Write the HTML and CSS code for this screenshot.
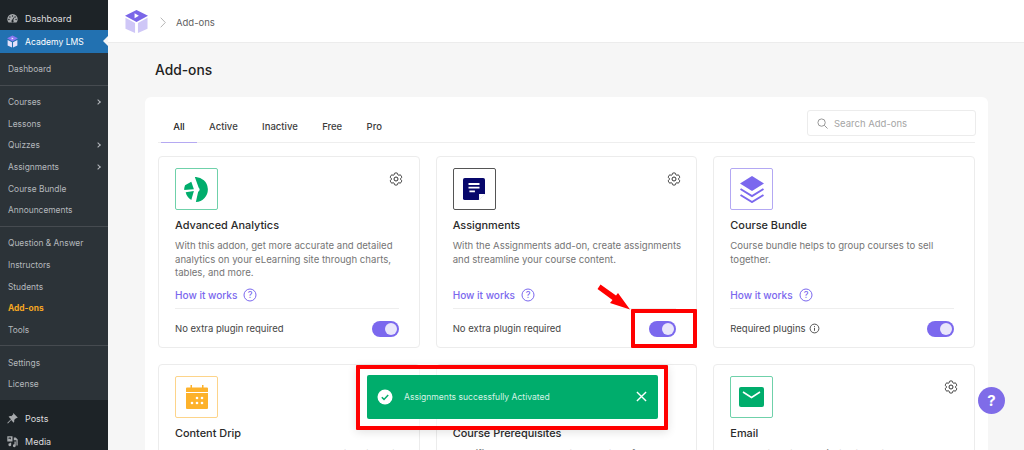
FILE: index.html
```html
<!DOCTYPE html>
<html lang="en">
<head>
<meta charset="utf-8">
<title>Add-ons</title>
<link rel="stylesheet" href="styles.css">
</head>
<body>
<div class="page">
  <aside class="sidebar">
    <a class="top-item first">
      <svg class="wp-icon" viewBox="0 0 20 20"><path fill="#a7aaad" d="M10 3a8 8 0 0 0-8 8c0 2 .7 3.800 1.900 5.200h12.200A8 8 0 0 0 18 11a8 8 0 0 0-8-8zM6 6.500a1.100 1.100 0 1 1 0 2.200 1.100 1.100 0 0 1 0-2.200zM10 5a1.100 1.100 0 1 1 0 2.200A1.100 1.100 0 0 1 10 5zm4 1.500a1.100 1.100 0 1 1 0 2.200 1.100 1.100 0 0 1 0-2.200zM4.500 10.500a1.100 1.100 0 1 1 0 2.200 1.100 1.100 0 0 1 0-2.200zm11 0a1.100 1.100 0 1 1 0 2.200 1.100 1.100 0 0 1 0-2.200zM13 8.500l-2 4.200a1.700 1.700 0 1 1-2 .1l3.200-4.700z"/></svg>
      <span>Dashboard</span>
    </a>
    <a class="top-item current">
      <svg class="wp-icon" viewBox="0 0 24 24"><path fill="#8b78f0" d="M12 1l10 5-10 6L2 6z"/><path fill="#e6e1fb" d="M3 9l8 4.500V23l-8-3.500zM21 9l-8 4.500V23l8-3.500z"/><path fill="#fff" d="M10.500 4.500l3.500 1.800-3.500 1.800z"/></svg>
      <span>Academy LMS</span>
    </a>
    <nav class="submenu">
      <div class="group"><a class="sub">Dashboard</a></div>
      <div class="group">
        <a class="sub">Courses<i class="chev"></i></a>
        <a class="sub">Lessons</a>
        <a class="sub">Quizzes<i class="chev"></i></a>
        <a class="sub">Assignments<i class="chev"></i></a>
        <a class="sub">Course Bundle</a>
        <a class="sub">Announcements</a>
      </div>
      <div class="group">
        <a class="sub">Question &amp; Answer</a>
        <a class="sub">Instructors</a>
        <a class="sub">Students</a>
        <a class="sub active">Add-ons</a>
        <a class="sub">Tools</a>
      </div>
      <div class="group">
        <a class="sub">Settings</a>
        <a class="sub">License</a>
      </div>
    </nav>
    <div class="lower">
      <a class="top-item">
        <svg class="wp-icon" viewBox="0 0 20 20"><path fill="#a7aaad" d="M11.500 2l6.500 6.500-1.300 1.300-1-.6-3.200 3.200c.6 1.500.3 3-.8 4.100L8 12.300 3 17.500l-1-.5.500-1L7.700 11 4 7.300c1.100-1.100 2.700-1.400 4.100-.8l3.200-3.200-.6-1z"/></svg>
        <span>Posts</span>
      </a>
      <a class="top-item">
        <svg class="wp-icon" viewBox="0 0 20 20"><path fill="#a7aaad" d="M2 2h8v8H2zm2 2v2.500l1.500-1 2 1.500V4zM12 4h3l3 3v9h-2V8h-4zM6 12h2v2.500A2.200 2.200 0 1 1 6 12.800zm7-2h2v6.500a2.200 2.200 0 1 1-2-2.200z"/></svg>
        <span>Media</span>
      </a>
    </div>
  </aside>

  <main class="main">
    <header class="topbar">
      <svg class="logo" viewBox="0 0 26 24"><path fill="#7a66e8" d="M13 0l12 6-12 6.500L1 6z"/><path fill="#cfc7f7" d="M1.500 8l10 5.500V24l-10-4.500zM24.500 8l-10 5.500V24l10-4.500z"/><path fill="#fff" d="M11 3.500l4.500 2.500L11 8.500z"/></svg>
      <svg class="crumb-sep" viewBox="0 0 6 11"><path d="M.7.7l4.600 4.800L.7 10.300" fill="none" stroke="#b5b5b5" stroke-width="1"/></svg>
      <span class="crumb">Add-ons</span>
    </header>
    <div class="content">
      <h1 class="title">Add-ons</h1>
      <section class="panel">
        <div class="tabs">
          <a class="tab on">All</a>
          <a class="tab">Active</a>
          <a class="tab">Inactive</a>
          <a class="tab">Free</a>
          <a class="tab">Pro</a>
          <div class="search">
            <svg class="search-icon" viewBox="0 0 12 12"><circle cx="5" cy="5" r="4" fill="none" stroke="#8e8e8e"/><path d="M8 8l3.500 3.500" stroke="#8e8e8e"/></svg>
            <span>Search Add-ons</span>
          </div>
        </div>
        <div class="grid">

          <article class="card">
            <div class="card-top">
              <div class="badge b-green">
                <svg class="art" viewBox="0 0 24 24"><path fill="#00ad6c" d="M10.400 0A12 12 0 1 1 11.400 24L13.600 14.200A2.500 2.500 0 0 0 14 10z"/><path fill="#00ad6c" d="M1 8L7 4.500 9.500 11.700.2 12.500A12 12 0 0 1 1 8z"/><path fill="#00ad6c" d="M1.600 14.600L9.500 13.500 7 22A12 12 0 0 1 1.600 14.600z"/></svg>
              </div>
              <svg class="gear" viewBox="0 0 24 24"><use href="#gear-shape"/></svg>
            </div>
            <h2 class="name">Advanced Analytics</h2>
            <p class="desc">With this addon, get more accurate and detailed analytics on your eLearning site through charts, tables, and more.</p>
            <a class="how">How it works<svg class="qmark" viewBox="0 0 14 14"><circle cx="7" cy="7" r="6" fill="none" stroke="#7b68ee" stroke-width="1"/><text x="7" y="10" text-anchor="middle" class="qtext">?</text></svg></a>
            <div class="foot"><span>No extra plugin required</span><span class="toggle"><i></i></span></div>
          </article>

          <article class="card">
            <div class="card-top">
              <div class="badge b-navy">
                <svg class="art art-note" viewBox="0 0 24 24"><path fill="#07076b" d="M2 0h20a2 2 0 0 1 2 2v15l-7 7H2a2 2 0 0 1-2-2V2a2 2 0 0 1 2-2z"/><path fill="#fff" d="M6 5.500h12v2H6zM6 9.500h12v2H6zM7 13.500h6v2H7zM24 17.500L17.500 24v-6.500z"/></svg>
              </div>
              <svg class="gear" viewBox="0 0 24 24"><use href="#gear-shape"/></svg>
            </div>
            <h2 class="name">Assignments</h2>
            <p class="desc">With the Assignments add-on, create assignments and streamline your course content.</p>
            <a class="how">How it works<svg class="qmark" viewBox="0 0 14 14"><circle cx="7" cy="7" r="6" fill="none" stroke="#7b68ee" stroke-width="1"/><text x="7" y="10" text-anchor="middle" class="qtext">?</text></svg></a>
            <div class="foot"><span>No extra plugin required</span><span class="toggle"><i></i></span></div>
          </article>

          <article class="card">
            <div class="card-top">
              <div class="badge b-purple">
                <svg class="art art-layers" viewBox="0 0 24 27"><path fill="#7b68ee" d="M12 0l12 7.500L12 15 0 7.500z"/><path fill="none" stroke="#7b68ee" stroke-width="2" d="M.5 13L12 20l11.500-7M.5 19L12 26l11.500-7"/></svg>
              </div>
            </div>
            <h2 class="name">Course Bundle</h2>
            <p class="desc">Course bundle helps to group courses to sell together.</p>
            <a class="how">How it works<svg class="qmark" viewBox="0 0 14 14"><circle cx="7" cy="7" r="6" fill="none" stroke="#7b68ee" stroke-width="1"/><text x="7" y="10" text-anchor="middle" class="qtext">?</text></svg></a>
            <div class="foot"><span class="req">Required plugins<svg class="info" viewBox="0 0 12 12"><circle cx="6" cy="6" r="4.800" fill="none" stroke="#444"/><path d="M6 5.300v3.200M6 3.400v1" stroke="#444"/></svg></span><span class="toggle"><i></i></span></div>
          </article>

          <article class="card">
            <div class="card-top">
              <div class="badge b-orange">
                <svg class="art art-cal" viewBox="0 0 22 24"><path fill="#fdb22b" d="M1 2.500h3.500V0h1.500v2.500h10V0h1.500v2.500H21a1 1 0 0 1 1 1V7H0V3.500a1 1 0 0 1 1-1zM0 8h22v15a1 1 0 0 1-1 1H1a1 1 0 0 1-1-1z"/><g fill="#fff"><circle cx="11" cy="13" r="1.300"/><circle cx="16" cy="13" r="1.300"/><circle cx="6" cy="18" r="1.300"/><circle cx="11" cy="18" r="1.300"/><circle cx="16" cy="18" r="1.300"/></g></svg>
              </div>
            </div>
            <h2 class="name">Content Drip</h2>
            <p class="desc">Unlock lessons by schedule or when the student meets a specific condition.</p>
          </article>

          <article class="card">
            <div class="card-top"><div class="badge b-none"></div></div>
            <h2 class="name">Course Prerequisites</h2>
            <p class="desc">Specific courses you must complete before you can enroll in a new course.</p>
          </article>

          <article class="card">
            <div class="card-top">
              <div class="badge b-green">
                <svg class="art art-mail" viewBox="0 0 25 20"><rect width="25" height="20" rx="2" fill="#00ad6c"/><path d="M4 5l8.500 5.500L21 5" fill="none" stroke="#fff" stroke-width="1.500"/></svg>
              </div>
              <svg class="gear" viewBox="0 0 24 24"><use href="#gear-shape"/></svg>
            </div>
            <h2 class="name">Email</h2>
            <p class="desc">Send automated emails to students and instructors for course events.</p>
          </article>
        </div>
      </section>
    </div>
  </main>
</div>

<svg class="defs" aria-hidden="true"><defs><g id="gear-shape" fill="none" stroke="#333" stroke-width="1.500" stroke-linejoin="round"><circle cx="12" cy="12" r="3"/><path d="M9.594 3.940c.09-.542.56-.94 1.110-.94h2.593c.55 0 1.020.398 1.110.94l.213 1.281c.063.374.313.686.645.870.074.040.147.083.22.127.324.196.72.257 1.075.124l1.217-.456a1.125 1.125 0 011.370.49l1.296 2.247a1.125 1.125 0 01-.26 1.431l-1.003.827c-.293.24-.438.613-.431.992a6.759 6.759 0 010 .255c-.007.378.138.75.43.99l1.005.828c.424.35.534.954.26 1.430l-1.298 2.247a1.125 1.125 0 01-1.369.491l-1.217-.456c-.355-.133-.75-.072-1.076.124a6.570 6.570 0 01-.22.128c-.331.183-.581.495-.644.869l-.213 1.280c-.09.543-.56.941-1.110.941h-2.594c-.55 0-1.020-.398-1.110-.94l-.213-1.281c-.062-.374-.312-.686-.644-.87a6.520 6.520 0 01-.22-.127c-.325-.196-.72-.257-1.076-.124l-1.217.456a1.125 1.125 0 01-1.369-.49l-1.297-2.247a1.125 1.125 0 01.26-1.431l1.004-.827c.292-.24.437-.613.43-.992a6.932 6.932 0 010-.255c.007-.378-.138-.75-.43-.99l-1.004-.828a1.125 1.125 0 01-.26-1.430l1.297-2.247a1.125 1.125 0 011.370-.491l1.216.456c.356.133.751.072 1.076-.124.072-.044.146-.087.22-.128.332-.183.582-.495.644-.869l.214-1.281z"/></g></defs></svg>

<div class="mark mark-toggle"></div>
<svg class="arrow" viewBox="0 0 40 30"><path fill="#f00" d="M4.500 1.500L20 12.500 22 10l12 16.500L14 20l2.500-3L1.500 6z"/></svg>
<div class="mark mark-toast"></div>
<div class="toast">
  <svg class="toast-check" viewBox="0 0 16 16"><circle cx="8" cy="8" r="7.500" fill="#fff"/><path d="M4.800 8.200l2.200 2.200 4.200-4.400" fill="none" stroke="#00ad6c" stroke-width="1.500"/></svg>
  <span class="toast-text">Assignments successfully Activated</span>
  <svg class="toast-x" viewBox="0 0 12 12"><path d="M1 1l10 10M11 1L1 11" stroke="#fff" stroke-width="1.500"/></svg>
</div>
<a class="help">?</a>
</body>
</html>
```

FILE: styles.css
```css
* { box-sizing: border-box; }
html, body { margin: 0; height: 450px; overflow: hidden; }
body { font-family: Inter, "Liberation Sans", sans-serif; background: #f6f6f6; color: #333; position: relative; }
.page { display: flex; height: 450px; overflow: hidden; }
.defs { width: 0; height: 0; position: absolute; }

.sidebar { width: 108px; flex: none; background: #1d2327; color: #dcdcde; position: relative; z-index: 2; }
.top-item { display: flex; align-items: center; gap: 6px; height: 23px; padding-left: 6px; font-size: 9px; color: #dcdcde; }
.top-item.first { height: 24px; margin-top: 6px; }
.top-item.current { background: #2271b1; color: #fff; font-size: 8.600px; position: relative; }
.top-item.current::after { content: ""; position: absolute; right: 0; top: 6px; border: 5px solid transparent; border-right-color: #f6f6f6; border-left-width: 0; }
.wp-icon { width: 13px; height: 13px; flex: none; }
.submenu { background: #2c3338; }
.group { padding: 5.500px 0 4.500px; border-bottom: 1px solid #464b50; }
.group:last-child { border-bottom: 0; }
.sub { display: flex; align-items: center; justify-content: space-between; height: 21.700px; padding: 0 8px; font-size: 8.400px; color: #b4b8bc; }
.sub.active { color: #f5a623; font-weight: 700; }
.chev { width: 4px; height: 4px; border-top: 1px solid #b4b8bc; border-right: 1px solid #b4b8bc; transform: rotate(45deg); }
.lower { padding-top: 7.500px; }

.main { flex: 1; min-width: 0; }
.topbar { height: 43px; background: #fff; border-bottom: 1px solid #ececec; display: flex; align-items: center; padding: 3px 0 0 16px; }
.logo { width: 25px; height: 23px; margin-top: -3px; }
.crumb-sep { width: 6px; height: 11px; margin-left: 11px; }
.crumb { margin-left: 10px; font-size: 9.500px; color: #5f5f5f; }
.content { padding: 0 36px 0 37px; }
.title { margin: 0 0 0 10px; padding-top: 18px; font-size: 13.800px; line-height: 19px; font-weight: 500; color: #222; height: 54px; }
.panel { background: #fff; border-radius: 6px; padding: 0 13px; height: 400px; }
.tabs { height: 46px; display: flex; align-items: flex-end; border-bottom: 1px solid #eee; position: relative; padding-left: 3px; }
.tab { height: 30px; padding: 0 12.200px; font-size: 9.500px; font-weight: 500; color: #3c3c3c; line-height: 28px; margin-bottom: -1px; }
.tab.on { color: #222; border-bottom: 1px solid #b5a9f2; }
.search { position: absolute; right: -1px; top: 13px; width: 169px; height: 26px; border: 1px solid #ececec; border-radius: 3px; display: flex; align-items: center; gap: 6px; padding-left: 9px; font-size: 9.500px; color: #a5a5a5; }
.search-icon { width: 11px; height: 11px; }

.grid { display: grid; grid-template-columns: repeat(3, 1fr); gap: 16.500px 16px; margin-top: 13px; }
.card { height: 191.500px; border: 1px solid #ececec; border-radius: 4px; padding: 11px 20px 0 16px; display: flex; flex-direction: column; }
.card-top { display: flex; justify-content: space-between; align-items: flex-start; height: 42px; }
.badge { width: 43px; height: 42px; border: 1px solid; border-radius: 2px; display: flex; align-items: center; justify-content: center; }
.b-green { border-color: #6fd1aa; }
.b-navy { border-color: #555; }
.b-purple { border-color: #b3a8f3; }
.b-orange { border-color: #fdd48a; }
.b-none { border-color: transparent; }
.art { width: 25px; height: 25px; }
.art-note { width: 22px; height: 22px; }
.art-layers { width: 24px; height: 27px; }
.art-cal { width: 22px; height: 24px; }
.art-mail { height: 20px; }
.gear { width: 16px; height: 16px; margin-top: 3.300px; margin-right: -5.300px; }
.name { margin: 8px 0 0; font-size: 10.900px; line-height: 15px; font-weight: 500; color: #2a2a2a; }
.desc { margin: 6px -5px 0 0; height: 40px; font-size: 9.600px; line-height: 13.500px; color: #757575; }
.how { display: flex; align-items: center; gap: 6px; height: 14px; margin-top: 9px; font-size: 10.050px; font-weight: 500; color: #7b68ee; }
.qmark { width: 14px; height: 14px; }
.qtext { font-size: 9px; fill: #7b68ee; font-family: Inter, sans-serif; }
.foot { display: flex; justify-content: space-between; align-items: center; margin-top: 6px; padding-top: 11.500px; border-top: 1px solid #eee; font-size: 9.500px; color: #454545; }
.req { display: flex; align-items: center; gap: 3px; }
.info { width: 11px; height: 11px; }
.toggle { width: 27px; height: 16px; border-radius: 8px; background: #7b68ee; display: flex; align-items: center; justify-content: flex-end; padding-right: 2px; }
.toggle i { width: 12px; height: 12px; border-radius: 50%; background: #e9e6fb; }

.mark { position: absolute; border: 4px solid #f00; border-radius: 1px; z-index: 5; }
.mark-toggle { left: 631px; top: 309px; width: 66px; height: 38.500px; }
.mark-toast { left: 356px; top: 364.500px; width: 312px; height: 65.500px; box-shadow: 0 2px 10px rgba(0,0,0,.12); background: rgba(255,255,255,.55); }
.arrow { position: absolute; left: 596px; top: 283px; width: 40px; height: 30px; z-index: 5; }
.toast { position: absolute; left: 367px; top: 375px; width: 291px; height: 43.500px; background: #00ad6c; border-radius: 2px; display: flex; align-items: center; padding: 0 11px 0 10px; z-index: 6; }
.toast-check { width: 16px; height: 16px; flex: none; }
.toast-text { margin-left: 11px; flex: 1; font-size: 8.570px; color: #d5f2e5; }
.toast-x { width: 11px; height: 11px; flex: none; }
.help { position: absolute; left: 978px; top: 387px; width: 27px; height: 27px; border-radius: 50%; background: #7f6ce8; color: #fff; font-size: 15px; font-weight: 700; display: flex; align-items: center; justify-content: center; z-index: 6; }
```
